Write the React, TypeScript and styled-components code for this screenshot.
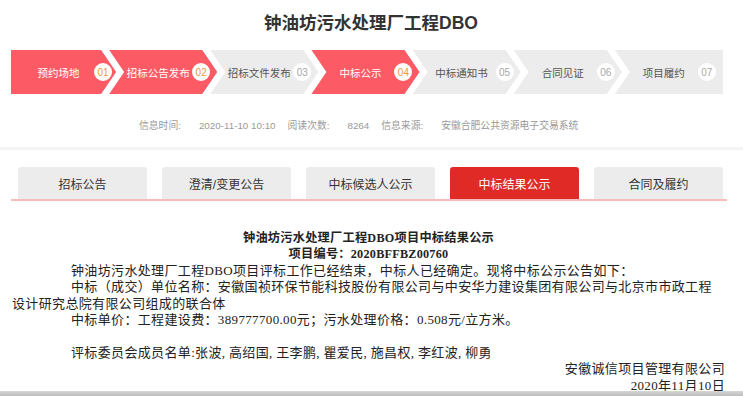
import styled, { createGlobalStyle } from "styled-components"

const GlobalStyle = createGlobalStyle`
  body {
    margin: 0;
    background: #fff;
    font-family: "Liberation Sans", "Noto Sans CJK SC", sans-serif;
  }
`

const steps = [
  { label: "预约场地", no: "01", active: true },
  { label: "招标公告发布", no: "02", active: true },
  { label: "招标文件发布", no: "03", active: false },
  { label: "中标公示", no: "04", active: true },
  { label: "中标通知书", no: "05", active: false },
  { label: "合同见证", no: "06", active: false },
  { label: "项目履约", no: "07", active: false },
]

const tabs = ["招标公告", "澄清/变更公告", "中标候选人公示", "中标结果公示", "合同及履约"]
const activeTab = 3

const Page = styled.div`
  width: 716px;
  margin-left: 11px;
`

const Title = styled.h1`
  margin: 0;
  padding-top: 11px;
  line-height: 24px;
  font-size: 17.5px;
  font-weight: bold;
  color: #333;
  text-align: center;
  padding-left: 4px;
`

const Steps = styled.div`
  display: flex;
  width: 712px;
  height: 44px;
  margin-top: 15px;
`

const Step = styled.div<{ $active: boolean; $pos: "first" | "mid" | "last" }>`
  flex: 1 1 0;
  display: flex;
  align-items: center;
  margin-left: ${(p) => (p.$pos === "first" ? "0" : "-7px")};
  padding-left: ${(p) => (p.$pos === "first" ? "12px" : "15px")};
  background: ${(p) => (p.$active ? "#fc5b65" : "#ececec")};
  color: ${(p) => (p.$active ? "#fff" : "#555")};
  clip-path: ${(p) =>
    p.$pos === "first"
      ? "polygon(0 0, calc(100% - 15px) 0, 100% 50%, calc(100% - 15px) 100%, 0 100%)"
      : p.$pos === "last"
      ? "polygon(0 0, 100% 0, 100% 100%, 0 100%, 15px 50%)"
      : "polygon(0 0, calc(100% - 15px) 0, 100% 50%, calc(100% - 15px) 100%, 0 100%, 15px 50%)"};
`

const StepLabel = styled.span<{ $first: boolean }>`
  width: ${(p) => (p.$first ? "71px" : "68px")};
  text-align: center;
  font-size: 10.5px;
  white-space: nowrap;
`

const StepNo = styled.span<{ $active: boolean }>`
  width: 18px;
  height: 18px;
  border-radius: 50%;
  background: #fff;
  color: ${(p) => (p.$active ? "#f0983a" : "#a8a8a8")};
  font-size: 10px;
  display: flex;
  align-items: center;
  justify-content: center;
`

const Info = styled.div`
  display: flex;
  margin-top: 22px;
  padding-left: 128px;
  line-height: 20px;
  font-size: 9.8px;
  color: #9a9a9a;
`

const InfoLabel = styled.span`
  margin-right: 18px;
`

const InfoValue = styled.span`
  margin-right: 12px;
`

const Divider = styled.div`
  height: 3px;
  margin: 11px 0 0 -11px;
  width: 743px;
  background: #f4f4f4;
`

const Tabs = styled.div`
  display: flex;
  gap: 15px;
  margin-top: 17px;
  padding-left: 7px;
  border-bottom: 2px solid #f6bcbc;
`

const Tab = styled.div<{ $active: boolean }>`
  width: 129px;
  height: 32px;
  border-radius: 3px 3px 0 0;
  background: ${(p) => (p.$active ? "#e02a26" : "#ececec")};
  color: ${(p) => (p.$active ? "#fff" : "#333")};
  font-size: 12px;
  display: flex;
  align-items: center;
  justify-content: center;
`

const Article = styled.div`
  padding: 29px 2px 0 1px;
  font-family: "Liberation Serif", "Noto Sans CJK SC", serif;
  font-size: 13px;
  letter-spacing: 0.35px;
  line-height: 16.4px;
  color: #222;
`

const Line = styled.div<{ $align?: "center" | "right"; $indent?: boolean; $bold?: boolean }>`
  text-align: ${(p) => p.$align || "left"};
  padding-left: ${(p) => (p.$indent ? "59px" : "0")};
  font-weight: ${(p) => (p.$bold ? "bold" : "normal")};
  font-size: ${(p) => (p.$bold ? "12.2px" : "13px")};
  letter-spacing: ${(p) => (p.$bold ? "0.25px" : "0.35px")};
  white-space: nowrap;
  min-height: 16.4px;
`

const ScrollBar = styled.div`
  position: fixed;
  left: 0;
  right: 0;
  bottom: 0;
  height: 5px;
  background: linear-gradient(#d6d6d6, #bdbdbd);
`

export default function App() {
  return (
    <>
      <GlobalStyle />
      <Page>
        <Title>钟油坊污水处理厂工程DBO</Title>
        <Steps>
          {steps.map((s, i) => (
            <Step
              key={s.no}
              $active={s.active}
              $pos={i === 0 ? "first" : i === steps.length - 1 ? "last" : "mid"}
            >
              <StepLabel $first={i === 0}>{s.label}</StepLabel>
              <StepNo $active={s.active}>{s.no}</StepNo>
            </Step>
          ))}
        </Steps>
        <Info>
          <InfoLabel>信息时间:</InfoLabel>
          <InfoValue>2020-11-10 10:10</InfoValue>
          <InfoLabel>阅读次数:</InfoLabel>
          <InfoValue>8264</InfoValue>
          <InfoLabel>信息来源:</InfoLabel>
          <InfoValue>安徽合肥公共资源电子交易系统</InfoValue>
        </Info>
        <Divider />
        <Tabs>
          {tabs.map((t, i) => (
            <Tab key={t} $active={i === activeTab}>
              {t}
            </Tab>
          ))}
        </Tabs>
        <Article>
          <Line $align="center" $bold>钟油坊污水处理厂工程DBO项目中标结果公示</Line>
          <Line $align="center" $bold>项目编号：2020BFFBZ00760</Line>
          <Line $indent>钟油坊污水处理厂工程DBO项目评标工作已经结束，中标人已经确定。现将中标公示公告如下：</Line>
          <Line $indent>
            中标（成交）单位名称：安徽国祯环保节能科技股份有限公司与中安华力建设集团有限公司与北京市市政工程
          </Line>
          <Line>设计研究总院有限公司组成的联合体</Line>
          <Line $indent>中标单价：工程建设费：389777700.00元；污水处理价格：0.508元/立方米。</Line>
          <Line />
          <Line $indent>评标委员会成员名单:张波, 高绍国, 王李鹏, 瞿爱民, 施昌权, 李红波, 柳勇</Line>
          <Line $align="right">安徽诚信项目管理有限公司</Line>
          <Line $align="right">2020年11月10日</Line>
        </Article>
      </Page>
      <ScrollBar />
    </>
  )
}
